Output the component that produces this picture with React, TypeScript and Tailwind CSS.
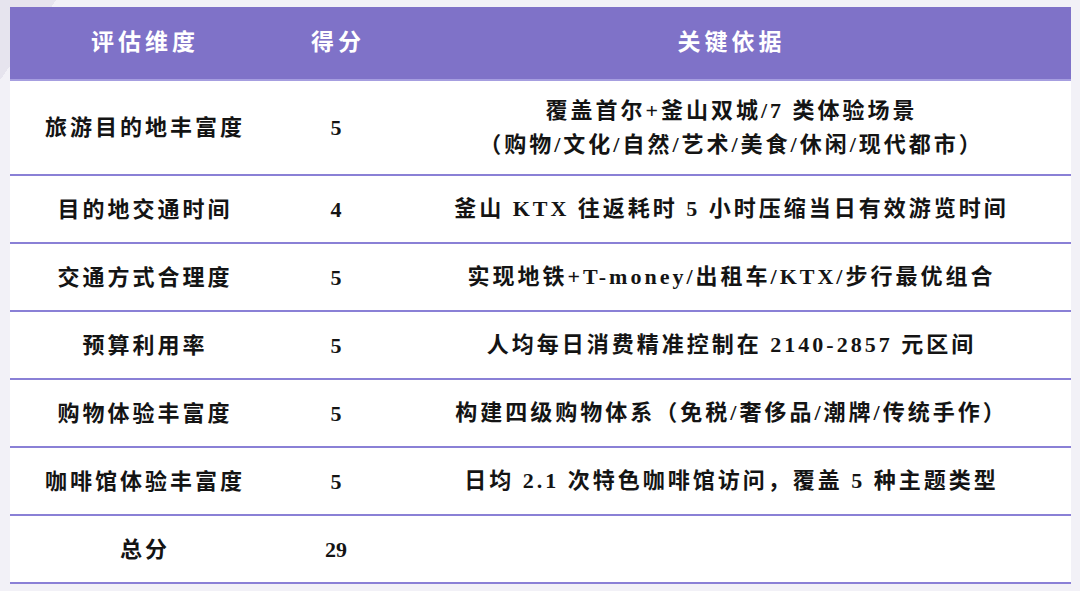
const rows: { dim: string; score: string; basis: string[]; tall?: boolean }[] = [
  {
    dim: "旅游目的地丰富度",
    score: "5",
    basis: ["覆盖首尔+釜山双城/7 类体验场景", "（购物/文化/自然/艺术/美食/休闲/现代都市）"],
    tall: true,
  },
  { dim: "目的地交通时间", score: "4", basis: ["釜山 KTX 往返耗时 5 小时压缩当日有效游览时间"] },
  { dim: "交通方式合理度", score: "5", basis: ["实现地铁+T-money/出租车/KTX/步行最优组合"] },
  { dim: "预算利用率", score: "5", basis: ["人均每日消费精准控制在 2140-2857 元区间"] },
  { dim: "购物体验丰富度", score: "5", basis: ["构建四级购物体系（免税/奢侈品/潮牌/传统手作）"] },
  { dim: "咖啡馆体验丰富度", score: "5", basis: ["日均 2.1 次特色咖啡馆访问，覆盖 5 种主题类型"] },
  { dim: "总分", score: "29", basis: [] },
];

const font = "font-['Liberation_Serif','Noto_Sans_CJK_SC',serif]";

export default function App() {
  return (
    <div
      className={`h-[591px] w-[1080px] overflow-hidden bg-[#f2f1f7] bg-[linear-gradient(125deg,#e6e4ee_0,#e6e4ee_46px,#f2f1f7_46px)] pt-[7px] ${font}`}
    >
      <div className="ml-[10px] w-[1061px] bg-white">
        {/* header */}
        <div className="grid h-[74px] grid-cols-[270px_112px_1fr] items-center border-b-2 border-[#a69ee0] bg-[#7f72c8] text-[23px] font-bold tracking-[4px] text-white">
          <div className="text-center">评估维度</div>
          <div className="pl-[4px] text-center">得分</div>
          <div className="text-center">关键依据</div>
        </div>

        {rows.map((r) => (
          <div
            key={r.dim}
            className={`grid grid-cols-[270px_112px_1fr] items-center border-b-2 border-[#8a80d6] text-[22px] font-semibold tracking-[3px] text-[#141414] ${
              r.tall ? "h-[95px]" : "h-[68px]"
            }`}
          >
            <div className="text-center">{r.dim}</div>
            <div className="text-center tracking-normal">{r.score}</div>
            <div className="flex flex-col items-center leading-[34px]">
              {r.basis.map((b) => (
                <div key={b}>{b}</div>
              ))}
            </div>
          </div>
        ))}
      </div>
    </div>
  );
}
